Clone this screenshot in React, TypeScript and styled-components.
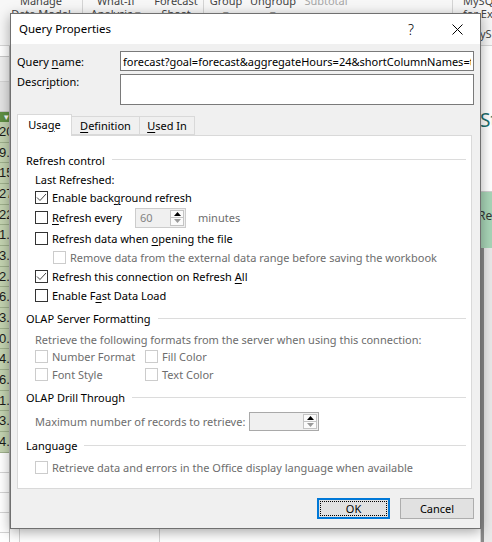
import React from "react";
import styled, { createGlobalStyle } from "styled-components";

const UI = `"Noto Sans", "Open Sans", sans-serif`;

const GlobalStyle = createGlobalStyle`
  html, body { margin: 0; padding: 0; }
  body { width: 492px; height: 542px; overflow: hidden; background: #fff; font-family: ${UI}; }
  * { box-sizing: border-box; }
`;

/* ---------- Excel background ---------- */
const Workspace = styled.div`
  position: relative;
  width: 492px;
  height: 542px;
  overflow: hidden;
  display: flex;
  flex-direction: column;
  background: #fff;
`;

const Ribbon = styled.div`
  height: 46px;
  flex: none;
  display: flex;
  background: #f7f7f7;
  border-bottom: 1px solid #d6d6d6;
  font-family: ${UI};
  font-size: 11px;
  color: #444;
  overflow: hidden;
`;

const RibbonGroup = styled.div<{ $w?: number }>`
  ${(p) => (p.$w ? `width: ${p.$w}px;` : "flex: 1;")}
  flex-shrink: 0;
  display: flex;
  border-right: 1px solid #d4d4d4;
  position: relative;
`;

const RibbonButton = styled.div<{ $w: number; $muted?: boolean }>`
  width: ${(p) => p.$w}px;
  flex: none;
  display: flex;
  flex-direction: column;
  align-items: center;
  margin-top: -6px;
  line-height: 13px;
  color: ${(p) => (p.$muted ? "#a6a6a6" : "#444")};
  white-space: nowrap;
  overflow: hidden;
`;

const RibbonLeft = styled(RibbonButton)`
  align-items: flex-start;
  padding-left: 10px;
`;

const GroupLabel = styled.div`
  position: absolute;
  left: 17px;
  bottom: 4px;
  color: #444;
`;

const Sheet = styled.div`
  flex: 1;
  display: flex;
  font-family: "Liberation Sans", sans-serif;
  font-size: 13px;
`;

const LeftPane = styled.div`
  width: 10px;
  flex: none;
  display: flex;
  flex-direction: column;
  overflow: hidden;
  border-right: 1px solid #bdbdbd;
`;

const Band = styled.div<{ $h: number; $bg: string; $line?: string }>`
  height: ${(p) => p.$h}px;
  flex: none;
  background: ${(p) => p.$bg};
  border-bottom: 1px solid ${(p) => p.$line || "#d4d4d4"};
`;

const HeaderCell = styled.div`
  height: 10px;
  flex: none;
  background: #5f8f43;
  color: #fff;
  font-size: 9px;
  line-height: 10px;
  text-align: right;
`;

const NumCell = styled.div`
  height: 20.67px;
  flex: none;
  background: #c3d3b0;
  border-bottom: 1px solid #9fb08c;
  color: #1a1a1a;
  line-height: 20px;
  white-space: nowrap;
  margin-left: -1px;
`;

const BlankCell = styled.div`
  height: 20px;
  flex: none;
  border-bottom: 1px solid #d4d4d4;
`;

const MidPane = styled.div`
  flex: 1;
  display: flex;
  background: #fff;
`;

const GridCol = styled.div<{ $w?: number }>`
  ${(p) => (p.$w ? `width: ${p.$w}px; flex: none;` : "flex: 1;")}
  border-right: 1px solid #d4d4d4;
`;

const RightPane = styled.div`
  width: 11px;
  flex: none;
  display: flex;
  flex-direction: column;
  overflow: hidden;
`;

const RightTitle = styled.div`
  height: 146px;
  flex: none;
  padding-top: 62px;
  color: #1c6d6d;
  font-family: ${UI};
  font-size: 19px;
  line-height: 24px;
  white-space: nowrap;
  margin-left: -1px;
  border-bottom: 1px solid #cfcfcf;
`;

const RightGreen = styled.div`
  height: 56px;
  flex: none;
  background: #a8d5b7;
  color: #333;
  font-family: ${UI};
  font-size: 12px;
  line-height: 16px;
  padding-top: 16px;
  margin-left: -3px;
  white-space: nowrap;
`;

const RightGrey = styled.div`
  flex: 1;
  background: #e9e9e9;
  border-left: 3px solid #8a8a8a;
`;

/* ---------- Dialog ---------- */
const Dialog = styled.div`
  position: absolute;
  left: 10px;
  top: 13px;
  width: 471px;
  height: 516px;
  border: 1px solid #707070;
  background: #f0f0f0;
  box-shadow: 0 3px 12px rgba(0, 0, 0, 0.35);
  display: flex;
  flex-direction: column;
  font-family: ${UI};
  font-size: 11px;
  color: #000;
`;

const TitleBar = styled.div`
  height: 30px;
  flex: none;
  background: #fff;
  display: flex;
  align-items: center;
  padding-left: 8px;
`;

const Title = styled.div`
  flex: 1;
  font-size: 11.5px;
  padding-bottom: 1px;
`;

const CaptionButton = styled.div`
  width: 46px;
  height: 30px;
  display: flex;
  align-items: center;
  justify-content: center;
  font-size: 14px;
  font-weight: 300;
`;

const Body = styled.div`
  flex: 1;
  display: flex;
  flex-direction: column;
  padding: 7px 6px 0 6px;
`;

const FieldRow = styled.div<{ $gap?: number }>`
  display: grid;
  grid-template-columns: 103px 1fr;
  margin-top: ${(p) => p.$gap || 0}px;
`;

const FieldLabel = styled.div<{ $h: number; $top?: boolean }>`
  height: ${(p) => p.$h}px;
  display: flex;
  align-items: ${(p) => (p.$top ? "flex-start" : "center")};
  line-height: 15px;
`;

const TextBox = styled.input<{ $h: number }>`
  height: ${(p) => p.$h}px;
  width: 100%;
  border: 1px solid #7a7a7a;
  background: #fff;
  font-family: ${UI};
  font-size: 11px;
  color: #000;
  padding: 0 2px;
  margin: 0;
  outline: none;
`;

const TextArea = styled.div<{ $h: number }>`
  height: ${(p) => p.$h}px;
  border: 1px solid #7a7a7a;
  background: #fff;
`;

const TabBar = styled.div`
  margin-top: 9px;
  height: 21px;
  display: flex;
  align-items: flex-end;
  position: relative;
  z-index: 1;
`;

const Tab = styled.div<{ $w: number; $active?: boolean }>`
  width: ${(p) => p.$w}px;
  height: ${(p) => (p.$active ? 22 : 19)}px;
  margin-bottom: ${(p) => (p.$active ? -1 : 0)}px;
  background: ${(p) => (p.$active ? "#fff" : "#f0f0f0")};
  border: 1px solid #d9d9d9;
  border-bottom: ${(p) => (p.$active ? "none" : "1px solid #d9d9d9")};
  ${(p) => (!p.$active ? "border-left: none;" : "")}
  display: flex;
  align-items: center;
  justify-content: center;
  padding-bottom: ${(p) => (p.$active ? 3 : 0)}px;
`;

const Panel = styled.div`
  height: 354px;
  margin-right: 2px;
  background: #fff;
  border: 1px solid #d9d9d9;
  padding: 14px 5px 0 8px;
  display: flex;
  flex-direction: column;
`;

const Heading = styled.div<{ $h: number }>`
  height: ${(p) => p.$h}px;
  flex: none;
  display: flex;
  align-items: center;
  white-space: nowrap;
  &::after {
    content: "";
    flex: 1;
    height: 1px;
    margin-left: 7px;
    margin-top: -1px;
    background: #dcdcdc;
  }
`;

const Row = styled.div<{ $h: number; $indent?: number; $disabled?: boolean }>`
  height: ${(p) => p.$h}px;
  flex: none;
  display: flex;
  align-items: center;
  padding-left: ${(p) => p.$indent ?? 9}px;
  white-space: nowrap;
  color: ${(p) => (p.$disabled ? "#6d6d6d" : "#000")};
`;

const Item = styled.label<{ $w?: number }>`
  display: flex;
  align-items: center;
  ${(p) => (p.$w ? `width: ${p.$w}px; flex: none;` : "")}
`;

const Fixed = styled.span<{ $w: number; $gap?: number; $muted?: boolean }>`
  width: ${(p) => p.$w}px;
  flex: none;
  display: inline-block;
  margin-left: ${(p) => p.$gap || 0}px;
  ${(p) => (p.$muted ? "color: #6d6d6d;" : "")}
`;

const Box = styled.span<{ $disabled?: boolean }>`
  width: 13px;
  height: 13px;
  flex: none;
  border: 1px solid ${(p) => (p.$disabled ? "#cccccc" : "#333333")};
  background: #fff;
  margin-right: 4px;
  display: inline-flex;
  align-items: center;
  justify-content: center;
`;

const Acc = styled.span`
  text-decoration: underline;
  text-underline-offset: 2px;
  text-decoration-thickness: 1px;
`;

const Spin = styled.div<{ $w: number; $h: number; $dark?: boolean }>`
  width: ${(p) => p.$w}px;
  height: ${(p) => p.$h}px;
  flex: none;
  display: flex;
  border: 1px solid ${(p) => (p.$dark ? "#a9a9a9" : "#cccccc")};
  background: #f0f0f0;
  padding: 1px;
`;

const SpinValue = styled.div`
  flex: 1;
  color: #838383;
  padding-left: 3px;
  display: flex;
  align-items: center;
`;

const SpinButtons = styled.div`
  width: 14px;
  flex: none;
  display: flex;
  flex-direction: column;
  border: 1px solid #c4c4c4;
  background: #fbfbfb;
`;

const SpinBtn = styled.div<{ $top?: boolean }>`
  flex: 1;
  display: flex;
  align-items: center;
  justify-content: center;
  ${(p) => (p.$top ? "border-bottom: 1px solid #c4c4c4;" : "")}
`;

const Footer = styled.div`
  height: 39px;
  flex: none;
  display: flex;
  justify-content: flex-end;
  align-items: flex-start;
  gap: 10px;
  padding-top: 9px;
`;

const Button = styled.div<{ $w: number; $default?: boolean }>`
  width: ${(p) => p.$w}px;
  height: 21px;
  background: #e1e1e1;
  border: ${(p) => (p.$default ? "2px solid #0078d7" : "1px solid #adadad")};
  display: flex;
  align-items: center;
  justify-content: center;
  position: relative;
  font-size: 11px;
  ${(p) =>
    p.$default
      ? `&::after { content: ""; position: absolute; inset: 1px; border: 1px dotted #000; }`
      : ""}
`;

const Check = ({ checked, disabled }: { checked?: boolean; disabled?: boolean }) => (
  <Box $disabled={disabled}>
    {checked && (
      <svg width="11" height="11" viewBox="0 0 11 11">
        <polyline points="1,5.5 4,8.5 10,2" fill="none" stroke="#444" strokeWidth="1" />
      </svg>
    )}
  </Box>
);

const Arrow = ({ up, color }: { up?: boolean; color: string }) => (
  <svg width="7" height="4" viewBox="0 0 7 4">
    <polygon points={up ? "0,4 7,4 3.5,0" : "0,0 7,0 3.5,4"} fill={color} />
  </svg>
);

const SpinBox = ({ w, h, value, dark }: { w: number; h: number; value?: string; dark?: boolean }) => (
  <Spin $w={w} $h={h} $dark={dark}>
    <SpinValue>{value}</SpinValue>
    <SpinButtons>
      <SpinBtn $top>
        <Arrow up color="#000" />
      </SpinBtn>
      <SpinBtn>
        <Arrow color="#9a9a9a" />
      </SpinBtn>
    </SpinButtons>
  </Spin>
);

const nums = ["20.4", "9.6", "15.2", "27.1", "22.8", "1.3", "3.5", "2.7", "6.1", "3.9", "0.8", "4.2", "6.6", "1.4", "3.0", "4.5"];

export default function App() {
  return (
    <Workspace>
      <GlobalStyle />
      <Ribbon>
        <RibbonGroup $w={83}>
          <RibbonButton $w={82}>
            <span>Manage</span>
            <span>Data Model</span>
          </RibbonButton>
        </RibbonGroup>
        <RibbonGroup $w={121}>
          <RibbonButton $w={66}>
            <span>What-If</span>
            <span>Analysis ▾</span>
          </RibbonButton>
          <RibbonButton $w={54}>
            <span>Forecast</span>
            <span>Sheet</span>
          </RibbonButton>
        </RibbonGroup>
        <RibbonGroup $w={249}>
          <RibbonButton $w={44}>
            <span>Group</span>
            <span>▾</span>
          </RibbonButton>
          <RibbonButton $w={50}>
            <span>Ungroup</span>
            <span>▾</span>
          </RibbonButton>
          <RibbonButton $w={56} $muted>
            <span>Subtotal</span>
            <span>&nbsp;</span>
          </RibbonButton>
        </RibbonGroup>
        <RibbonGroup>
          <RibbonLeft $w={60}>
            <span>MySQL</span>
            <span>for Excel</span>
          </RibbonLeft>
          <GroupLabel>MySQL</GroupLabel>
        </RibbonGroup>
      </Ribbon>
      <Sheet>
        <LeftPane>
          <Band $h={11} $bg="#ffffff" $line="#c8c8c8" />
          <Band $h={25} $bg="#efefef" />
          <Band $h={30} $bg="#e4e4e4" $line="#c8c8c8" />
          <HeaderCell>▾</HeaderCell>
          {nums.map((n) => (
            <NumCell key={n}>{n}</NumCell>
          ))}
          <BlankCell />
          <BlankCell />
          <BlankCell />
          <BlankCell />
          <BlankCell />
        </LeftPane>
        <MidPane>
          <GridCol $w={10} />
          <GridCol $w={140} />
          <GridCol />
        </MidPane>
        <RightPane>
          <RightTitle>Sta</RightTitle>
          <RightGreen>Reg</RightGreen>
          <RightGrey />
        </RightPane>
      </Sheet>

      <Dialog>
        <TitleBar>
          <Title>Query Properties</Title>
          <CaptionButton>?</CaptionButton>
          <CaptionButton>
            <svg width="11" height="11" viewBox="0 0 11 11">
              <path d="M0.5 0.5 L10.5 10.5 M10.5 0.5 L0.5 10.5" stroke="#000" strokeWidth="1" />
            </svg>
          </CaptionButton>
        </TitleBar>
        <Body>
          <FieldRow>
            <FieldLabel $h={20}>
              <span>
                Query <Acc>n</Acc>ame:
              </span>
            </FieldLabel>
            <TextBox
              $h={20}
              readOnly
              value="forecast?goal=forecast&aggregateHours=24&shortColumnNames=true&unitGroup=metric"
            />
          </FieldRow>
          <FieldRow $gap={3}>
            <FieldLabel $h={31} $top>
              <span>
                Descr<Acc>i</Acc>ption:
              </span>
            </FieldLabel>
            <TextArea $h={31} />
          </FieldRow>

          <TabBar>
            <Tab $w={55} $active>
              <span>
                Usa<Acc>g</Acc>e
              </span>
            </Tab>
            <Tab $w={68}>
              <span>
                <Acc>D</Acc>efinition
              </span>
            </Tab>
            <Tab $w={55}>
              <span>
                <Acc>U</Acc>sed In
              </span>
            </Tab>
          </TabBar>
          <Panel>
            <Heading $h={20}>Refresh control</Heading>
            <Row $h={19}>Last Refreshed:</Row>
            <Row $h={17}>
              <Item>
                <Check checked />
                <span>
                  Enable back<Acc>g</Acc>round refresh
                </span>
              </Item>
            </Row>
            <Row $h={23}>
              <Item>
                <Check />
                <Fixed $w={83}>
                  <Acc>R</Acc>efresh every
                </Fixed>
              </Item>
              <SpinBox w={51} h={20} value="60" />
              <Fixed $w={60} $gap={12} $muted>
                minutes
              </Fixed>
            </Row>
            <Row $h={19}>
              <Item>
                <Check />
                <span>
                  Refresh data when <Acc>o</Acc>pening the file
                </span>
              </Item>
            </Row>
            <Row $h={19} $indent={27} $disabled>
              <Item>
                <Check disabled />
                <span>Remove data from the external data range before saving the workbook</span>
              </Item>
            </Row>
            <Row $h={19}>
              <Item>
                <Check checked />
                <span>
                  Refresh this connection on Refresh <Acc>A</Acc>ll
                </span>
              </Item>
            </Row>
            <Row $h={19}>
              <Item>
                <Check />
                <span>
                  Enable F<Acc>a</Acc>st Data Load
                </span>
              </Item>
            </Row>

            <Heading $h={27}>OLAP Server Formatting</Heading>
            <Row $h={15} $disabled>
              Retrieve the following formats from the server when using this connection:
            </Row>
            <Row $h={18} $disabled>
              <Item $w={110}>
                <Check disabled />
                <span>Number Format</span>
              </Item>
              <Item>
                <Check disabled />
                <span>Fill Color</span>
              </Item>
            </Row>
            <Row $h={19} $disabled>
              <Item $w={110}>
                <Check disabled />
                <span>Font Style</span>
              </Item>
              <Item>
                <Check disabled />
                <span>Text Color</span>
              </Item>
            </Row>

            <Heading $h={27}>OLAP Drill Through</Heading>
            <Row $h={21} $disabled>
              <Fixed $w={214}>Maximum number of records to retrieve:</Fixed>
              <SpinBox w={70} h={19} dark />
            </Row>

            <Heading $h={27}>Language</Heading>
            <Row $h={17} $disabled>
              <Item>
                <Check disabled />
                <span>Retrieve data and errors in the Office display language when available</span>
              </Item>
            </Row>
          </Panel>
          <Footer>
            <Button $w={73} $default>
              OK
            </Button>
            <Button $w={74}>Cancel</Button>
          </Footer>
        </Body>
      </Dialog>
    </Workspace>
  );
}
